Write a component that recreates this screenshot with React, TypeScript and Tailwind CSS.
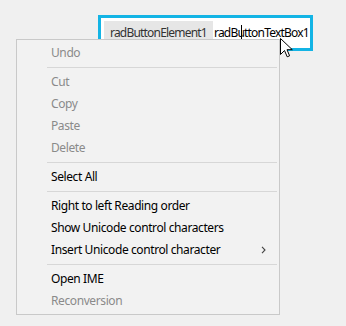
import React from "react";

type Item = { label: string; disabled?: boolean; sub?: boolean } | "sep";

const items: Item[] = [
  { label: "Undo", disabled: true },
  "sep",
  { label: "Cut", disabled: true },
  { label: "Copy", disabled: true },
  { label: "Paste", disabled: true },
  { label: "Delete", disabled: true },
  "sep",
  { label: "Select All" },
  "sep",
  { label: "Right to left Reading order" },
  { label: "Show Unicode control characters" },
  { label: "Insert Unicode control character", sub: true },
  "sep",
  { label: "Open IME" },
  { label: "Reconversion", disabled: true },
];

export default function App() {
  return (
    <div
      className="relative w-[346px] h-[326px] bg-[#f0f0f0] overflow-hidden tracking-[-0.4px]"
      style={{ fontFamily: '"Noto Sans", "Open Sans", sans-serif' }}
    >
      <div className="pt-[15px] pl-[98px]">
        <div className="w-[215px] h-[36px] border-[3px] border-[#13b4e5] bg-white p-[3px] flex items-start tracking-[-0.8px]">
          <div className="h-[24px] w-[109px] shrink-0 bg-[#e6e6e6] flex items-center pl-[6px] text-[12px] text-[#333333] whitespace-nowrap">
            radButtonElement1
          </div>
          <div className="relative h-[24px] flex items-center pl-[1px] text-[12px] text-black whitespace-nowrap">
            radButtonTextBox1
            <div className="absolute left-[28px] top-[4px] w-[1px] h-[16px] bg-black" />
          </div>
        </div>
      </div>

      <div className="absolute left-[16px] top-[39px] w-[264px] border border-[#c9c9c9] bg-[#f2f2f2] py-[2px] text-[12px]">
        {items.map((it, i) =>
          it === "sep" ? (
            <div key={i} className="h-[7px] pt-[3px] pl-[30px] pr-[2px]">
              <div className="h-[1px] bg-[#d7d7d7]" />
            </div>
          ) : (
            <div
              key={i}
              className={`h-[22px] flex items-center pl-[34px] pr-[13px] whitespace-nowrap ${
                it.disabled ? "text-[#8a8a8a]" : "text-black"
              }`}
            >
              <span className="flex-1">{it.label}</span>
              {it.sub && (
                <svg width="5" height="8" viewBox="0 0 5 8">
                  <path d="M1 0.8 L4 4 L1 7.2" fill="none" stroke="#444" strokeWidth="1.1" />
                </svg>
              )}
            </div>
          )
        )}
      </div>

      <svg
        className="absolute left-[280px] top-[38px]"
        width="13"
        height="21"
        viewBox="0 0 13 21"
      >
        <path
          d="M0.5 0.5 L0.5 16.5 L4.5 12.5 L7.2 18.8 L9.6 17.8 L7 11.7 L12.3 11.7 Z"
          fill="white"
          stroke="black"
          strokeWidth="1"
          strokeLinejoin="miter"
        />
      </svg>
    </div>
  );
}
